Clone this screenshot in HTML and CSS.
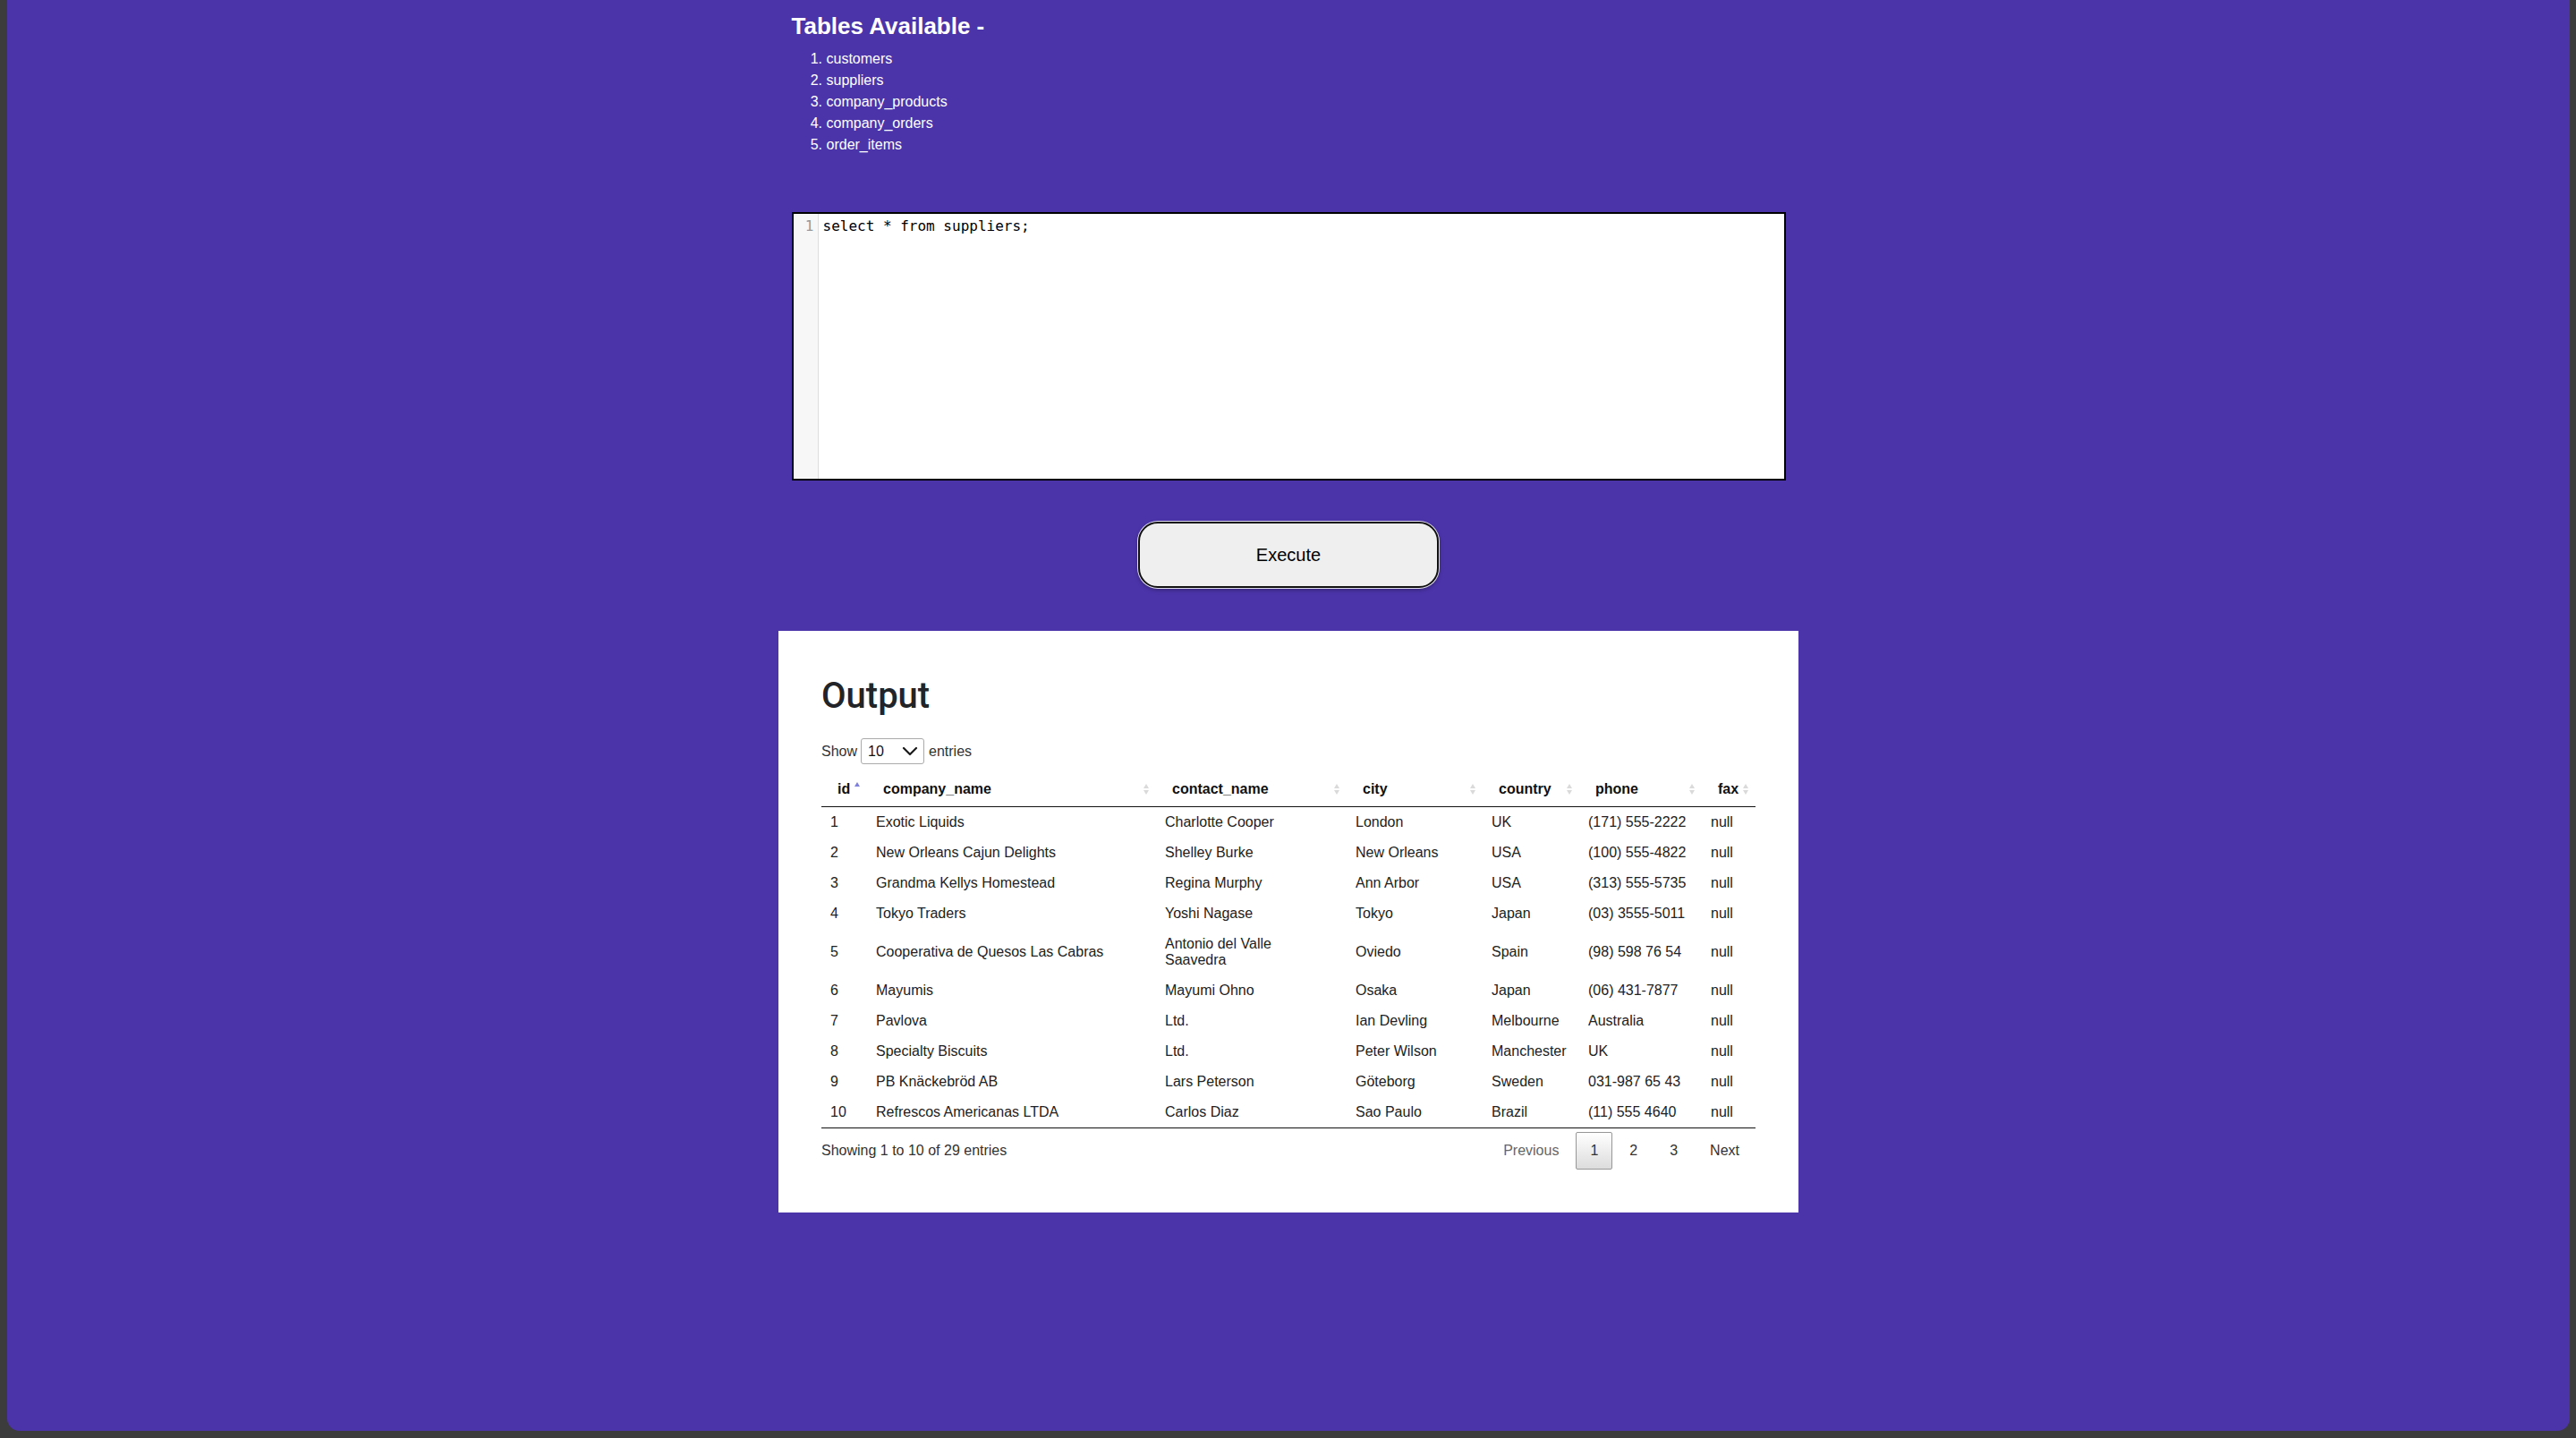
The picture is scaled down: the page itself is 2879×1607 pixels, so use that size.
FILE: index.html
```html
<!DOCTYPE html>
<html lang="en">
<head>
<meta charset="utf-8">
<title>SQL Playground</title>
<link rel="stylesheet" href="styles.css">
</head>
<body>
<div class="frame">
  <main class="content">
    <h2 class="tables-title">Tables Available -</h2>
    <ol class="tables-list">
      <li>customers</li>
      <li>suppliers</li>
      <li>company_products</li>
      <li>company_orders</li>
      <li>order_items</li>
    </ol>
    <div class="editor">
      <div class="gutter"><div class="line-no">1</div></div>
      <div class="code"><div class="code-line">select * from suppliers;</div></div>
    </div>
    <div class="actions"><button class="execute" type="button">Execute</button></div>
  </main>

  <section class="card">
    <h1 class="card-title">Output</h1>
    <div class="length">
      <span>Show</span>
      <div class="select"><span>10</span>
        <svg class="chev" width="18" height="11" viewBox="0 0 18 11"><polyline points="2,2 9,9 16,2" fill="none" stroke="#1a1a1a" stroke-width="2.2" stroke-linecap="round" stroke-linejoin="round"/></svg>
      </div>
      <span>entries</span>
    </div>
    <table class="results">
      <colgroup>
        <col class="c-id"><col class="c-company"><col class="c-contact"><col class="c-city"><col class="c-country"><col class="c-phone"><col class="c-fax">
      </colgroup>
      <thead>
        <tr>
          <th class="sort asc">id</th>
          <th class="sort">company_name</th>
          <th class="sort">contact_name</th>
          <th class="sort">city</th>
          <th class="sort">country</th>
          <th class="sort">phone</th>
          <th class="sort">fax</th>
        </tr>
      </thead>
      <tbody>
        <tr><td>1</td><td>Exotic Liquids</td><td>Charlotte Cooper</td><td>London</td><td>UK</td><td>(171) 555-2222</td><td>null</td></tr>
        <tr><td>2</td><td>New Orleans Cajun Delights</td><td>Shelley Burke</td><td>New Orleans</td><td>USA</td><td>(100) 555-4822</td><td>null</td></tr>
        <tr><td>3</td><td>Grandma Kellys Homestead</td><td>Regina Murphy</td><td>Ann Arbor</td><td>USA</td><td>(313) 555-5735</td><td>null</td></tr>
        <tr><td>4</td><td>Tokyo Traders</td><td>Yoshi Nagase</td><td>Tokyo</td><td>Japan</td><td>(03) 3555-5011</td><td>null</td></tr>
        <tr><td>5</td><td>Cooperativa de Quesos Las Cabras</td><td>Antonio del Valle<br>Saavedra</td><td>Oviedo</td><td>Spain</td><td>(98) 598 76 54</td><td>null</td></tr>
        <tr><td>6</td><td>Mayumis</td><td>Mayumi Ohno</td><td>Osaka</td><td>Japan</td><td>(06) 431-7877</td><td>null</td></tr>
        <tr><td>7</td><td>Pavlova</td><td>Ltd.</td><td>Ian Devling</td><td>Melbourne</td><td>Australia</td><td>null</td></tr>
        <tr><td>8</td><td>Specialty Biscuits</td><td>Ltd.</td><td>Peter Wilson</td><td>Manchester</td><td>UK</td><td>null</td></tr>
        <tr><td>9</td><td>PB Knäckebröd AB</td><td>Lars Peterson</td><td>Göteborg</td><td>Sweden</td><td>031-987 65 43</td><td>null</td></tr>
        <tr><td>10</td><td>Refrescos Americanas LTDA</td><td>Carlos Diaz</td><td>Sao Paulo</td><td>Brazil</td><td>(11) 555 4640</td><td>null</td></tr>
      </tbody>
    </table>
    <div class="table-foot">
      <div class="info">Showing 1 to 10 of 29 entries</div>
      <div class="paging">
        <span class="page-btn disabled">Previous</span>
        <span class="page-btn current">1</span>
        <span class="page-btn">2</span>
        <span class="page-btn">3</span>
        <span class="page-btn">Next</span>
      </div>
    </div>
  </section>
</div>
</body>
</html>
```
FILE: styles.css
```css
* { box-sizing: border-box; }

html, body {
  margin: 0;
  padding: 0;
  background: #3c3c3c;
}

body {
  padding: 0 7px 8px 8px;
  font-family: "Liberation Sans", Arial, sans-serif;
  font-size: 16px;
}

.frame {
  height: 1599px;
  background: #4b34a9;
  border-radius: 0 0 14px 14px;
  padding-top: 14px;
  overflow: hidden;
}

.content {
  width: 1111px;
  margin: 0 auto;
}

.tables-title {
  margin: 0;
  font-family: "Liberation Sans", Arial, sans-serif;
  font-weight: 700;
  font-size: 26px;
  line-height: 30px;
  color: #ffffff;
}

.tables-list {
  margin: 10px 0 0;
  padding-left: 39px;
  color: #ffffff;
  font-size: 16px;
  line-height: 24px;
}

.editor {
  margin-top: 63px;
  height: 300px;
  border: 2px solid #000;
  background: #fff;
  display: flex;
}

.gutter {
  width: 28px;
  flex: none;
  background: #f7f7f7;
  border-right: 1px solid #dddddd;
  padding-top: 4px;
}

.line-no {
  text-align: right;
  padding-right: 4px;
  color: #999999;
  font-family: "DejaVu Sans Mono", "Liberation Mono", monospace;
  font-size: 16px;
  line-height: 20px;
}

.code {
  flex: 1;
  padding: 4px 0 0 5px;
}

.code-line {
  font-family: "DejaVu Sans Mono", "Liberation Mono", monospace;
  font-size: 16px;
  line-height: 20px;
  color: #000;
  white-space: pre;
}

.actions {
  margin-top: 46px;
  display: flex;
  justify-content: center;
}

.execute {
  width: 336px;
  height: 74px;
  border: 2px solid #111;
  border-radius: 22px;
  background: #efefef;
  box-shadow: 0 0 0 1px rgba(255, 255, 255, 0.85), 0 2px 5px rgba(0, 0, 0, 0.35);
  font-family: "Liberation Sans", Arial, sans-serif;
  font-size: 20px;
  color: #000;
  padding: 0;
}

.card {
  width: 1140px;
  margin: 48px auto 0;
  background: #fff;
  padding: 50px 48px 48px;
  color: #222;
}

.card-title {
  margin: 0;
  font-family: Roboto, "Liberation Sans", Arial, sans-serif;
  font-weight: 500;
  font-size: 40px;
  line-height: 46px;
  color: #212529;
}

.length {
  margin-top: 24px;
  height: 29px;
  display: flex;
  align-items: center;
  gap: 4px;
  font-size: 16px;
  color: #333;
}

.select {
  width: 71px;
  height: 29px;
  border: 1px solid #aaaaaa;
  border-radius: 3px;
  display: flex;
  align-items: center;
  justify-content: space-between;
  padding: 0 6px 0 7px;
  color: #111;
  margin-right: 1px;
}

.chev { display: block; }

.results {
  margin-top: 9px;
  width: 100%;
  table-layout: fixed;
  border-collapse: separate;
  border-spacing: 0;
  border-bottom: 1px solid #111;
  font-size: 16px;
}

.c-id { width: 51px; }
.c-company { width: 323px; }
.c-contact { width: 213px; }
.c-city { width: 152px; }
.c-country { width: 108px; }
.c-phone { width: 137px; }
.c-fax { width: 60px; }

.results th {
  position: relative;
  text-align: left;
  font-weight: 700;
  color: #111;
  padding: 10px 18px;
  line-height: 18px;
  border-bottom: 1px solid #111;
  white-space: nowrap;
}

.results th.sort::before,
.results th.sort::after {
  content: "";
  position: absolute;
  right: 8px;
  width: 0;
  height: 0;
  border-left: 3px solid transparent;
  border-right: 3px solid transparent;
}

.results th.sort::before {
  top: calc(50% - 6px);
  border-bottom: 5px solid #dadada;
}

.results th.sort::after {
  top: calc(50% + 1px);
  border-top: 5px solid #dadada;
}

.results th.asc::before {
  border-bottom-color: #7f7fdc;
  top: calc(50% - 8px);
}

.results th.asc::after {
  display: none;
}

.results td {
  padding: 8px 10px;
  line-height: 18px;
  color: #222;
  vertical-align: middle;
}

.table-foot {
  margin-top: 4px;
  height: 42px;
  display: flex;
  align-items: center;
  justify-content: space-between;
  color: #333;
}

.info {
  font-size: 16px;
}

.paging {
  display: flex;
  align-items: center;
  padding-right: 1px;
}

.page-btn {
  margin-left: 2px;
  padding: 8px 16px;
  line-height: 24px;
  border: 1px solid transparent;
  border-radius: 2px;
  color: #333;
}

.page-btn.disabled {
  color: #666;
}

.page-btn.current {
  border-color: #979797;
  background: linear-gradient(to bottom, #ffffff 0%, #dcdcdc 100%);
  padding: 8px 15px;
}
```
